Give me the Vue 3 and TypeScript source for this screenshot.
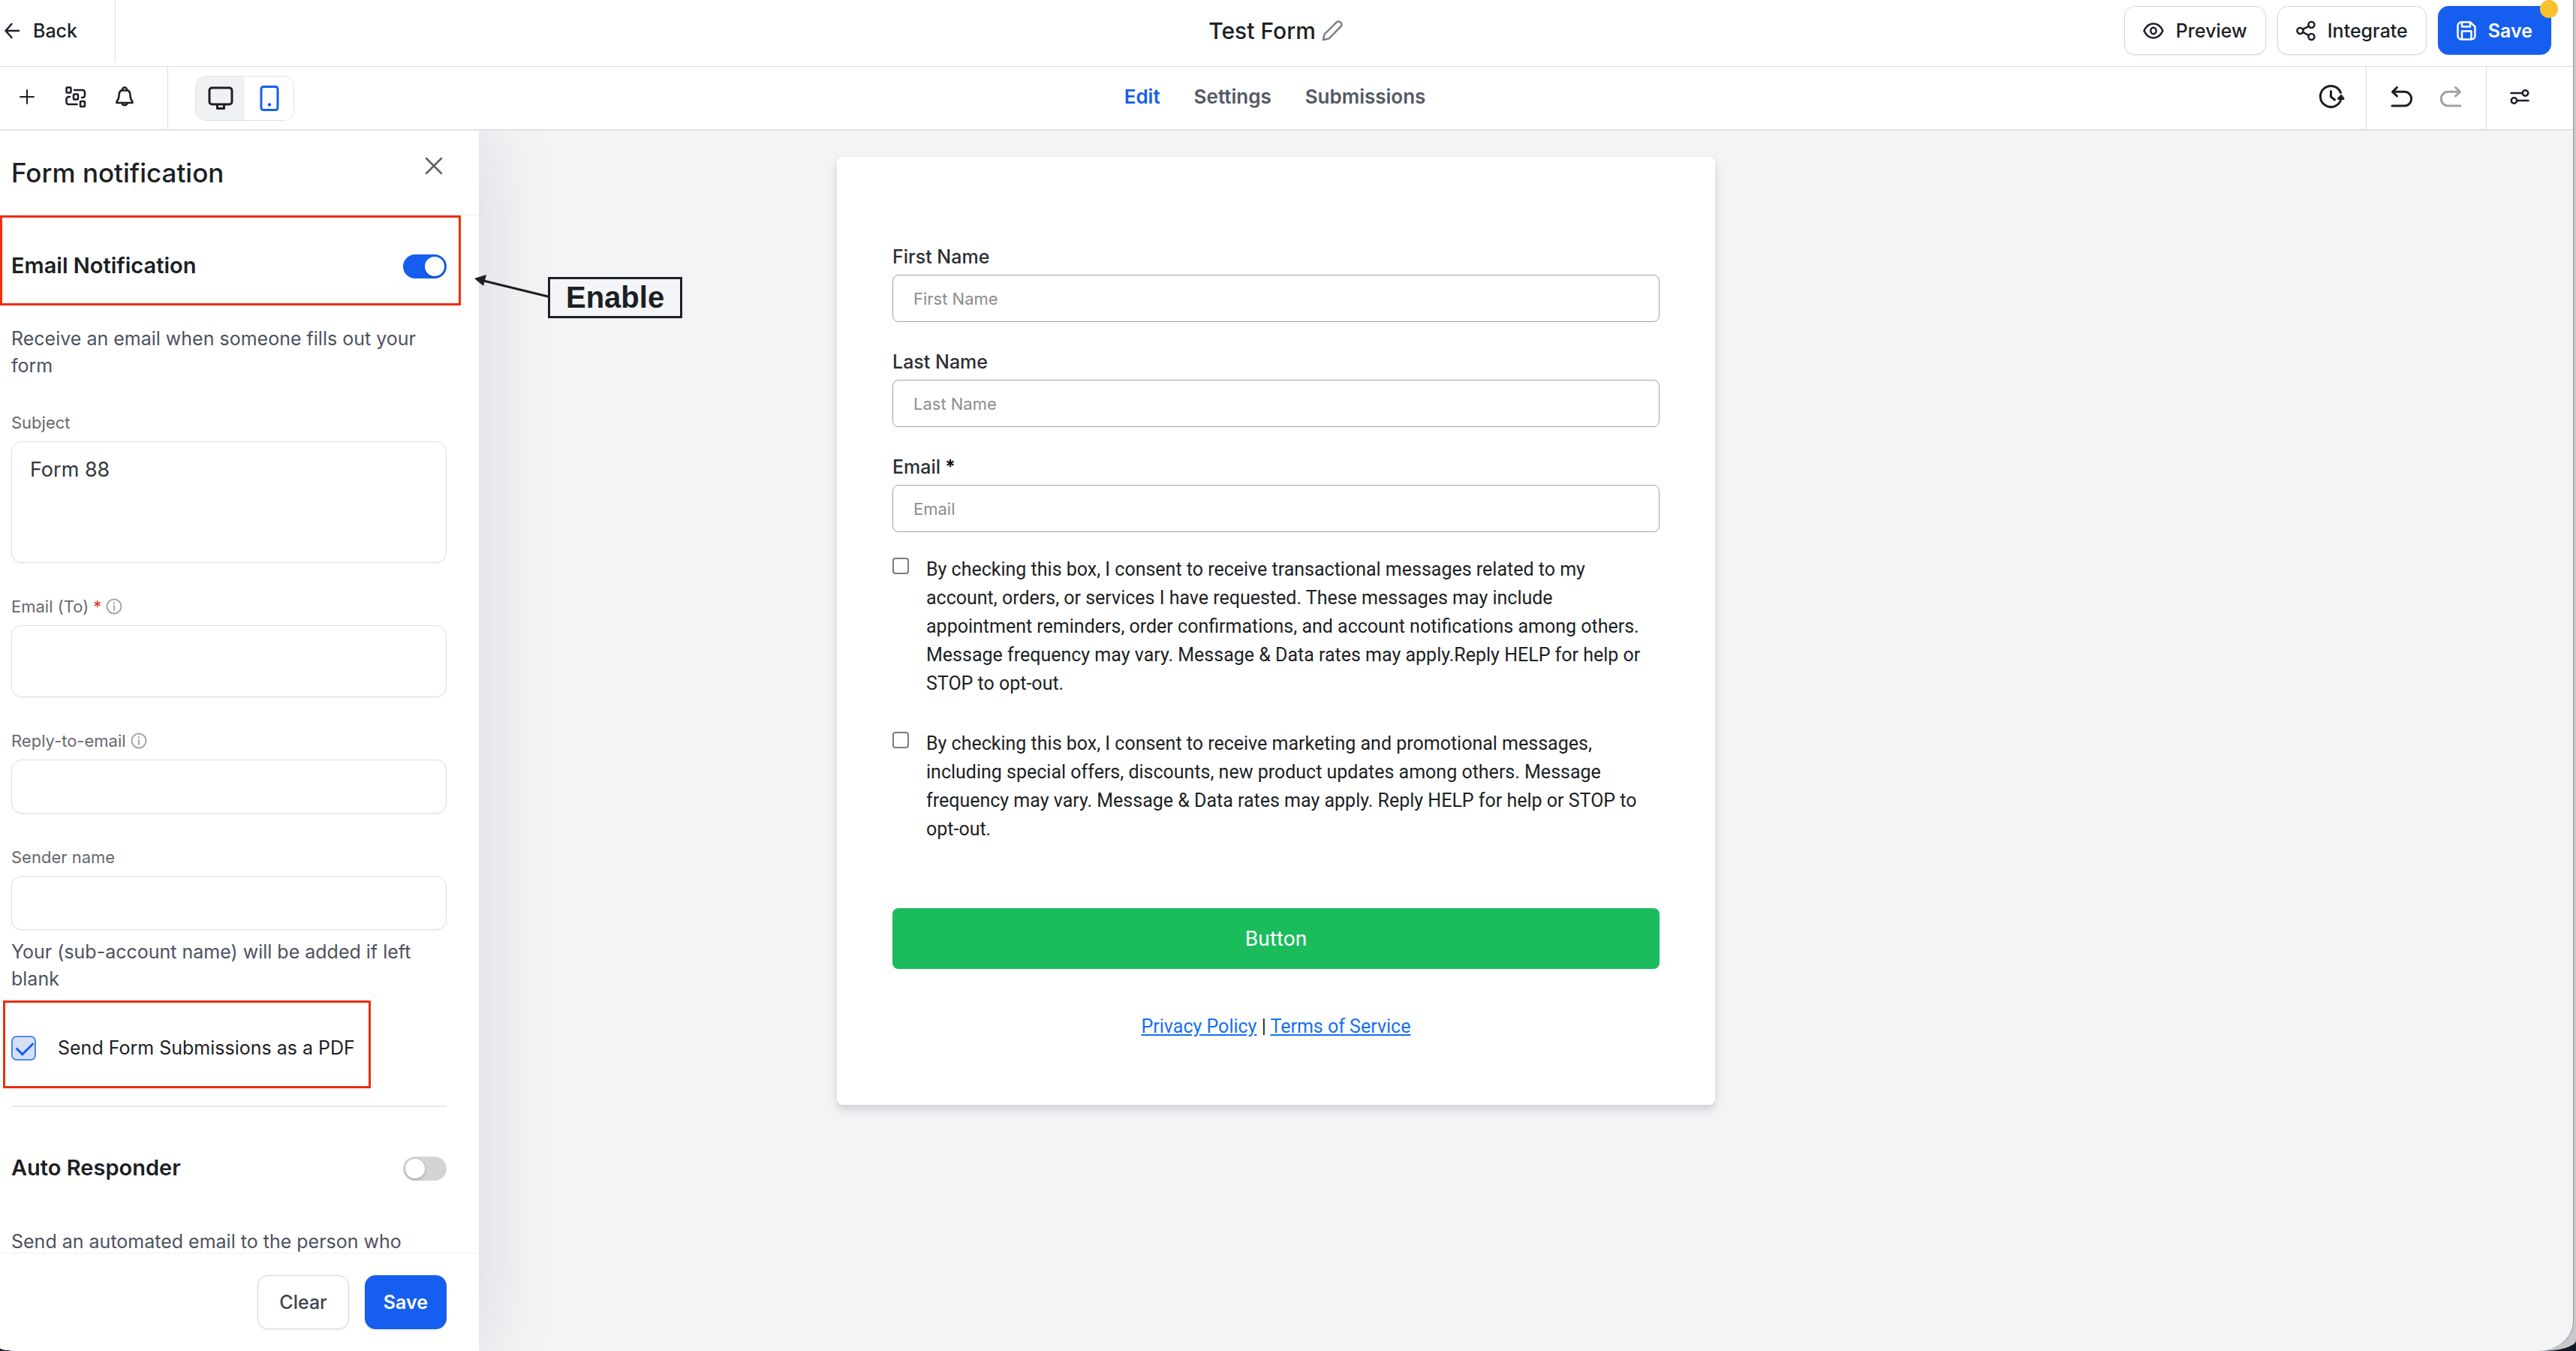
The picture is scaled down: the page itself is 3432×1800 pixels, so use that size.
<script setup lang="ts">
import { ref } from 'vue'

interface Field {
  id: string
  label: string
  required?: boolean
}

interface Consent {
  id: string
  text: string
}

const tabs = ['Edit', 'Settings', 'Submissions']
const activeTab = ref('Edit')

const subject = ref('Form 88')
const emailTo = ref('')
const replyTo = ref('')
const senderName = ref('')
const emailNotification = ref(true)
const autoResponder = ref(false)
const sendAsPdf = ref(true)

const fields: Field[] = [
  { id: 'first-name', label: 'First Name' },
  { id: 'last-name', label: 'Last Name' },
  { id: 'email', label: 'Email', required: true },
]

const consents: Consent[] = [
  {
    id: 'consent-transactional',
    text: 'By checking this box, I consent to receive transactional messages related to my account, orders, or services I have requested. These messages may include appointment reminders, order confirmations, and account notifications among others. Message frequency may vary. Message & Data rates may apply.Reply HELP for help or STOP to opt-out.',
  },
  {
    id: 'consent-marketing',
    text: 'By checking this box, I consent to receive marketing and promotional messages, including special offers, discounts, new product updates among others. Message frequency may vary. Message & Data rates may apply. Reply HELP for help or STOP to opt-out.',
  },
]
</script>

<template>
  <div class="desktop">
    <div class="bezel">
      <div class="window">
        <header class="topbar">
          <div class="topbar-left">
            <button class="back" type="button">
              <svg width="20" height="20" viewBox="0 0 20 20"><path d="M19 10H1.500M9.500 1 1.500 10l8 9" /></svg>
              Back
            </button>
          </div>
          <div class="title">
            <h1>Test Form</h1>
            <button class="icon-btn muted" type="button" aria-label="Rename form">
              <svg width="28" height="28" viewBox="0 0 28 28"><path d="M2 26l1.200-6.200a4 4 0 0 1 1-1.800L19.500 2.800a4 4 0 0 1 5.700 5.700L10 23.800a4 4 0 0 1-1.800 1z" /></svg>
            </button>
          </div>
          <div class="topbar-right">
            <button class="btn" type="button">
              <svg width="28" height="26" viewBox="0 0 28 26"><path d="M1.500 13C4 7.500 8.500 3.500 14 3.500s10 4 12.500 9.500C24 18.500 19.500 22.500 14 22.500S4 18.500 1.500 13z" /><ellipse cx="14" cy="13" rx="3.700" ry="4.200" /></svg>
              Preview
            </button>
            <button class="btn" type="button">
              <svg width="26" height="28" viewBox="0 0 26 28"><circle cx="20.500" cy="6" r="4" /><circle cx="5.500" cy="14" r="4" /><circle cx="20.500" cy="22" r="4" /><path d="M9 12.200l8-4.300M9 15.800l8 4.300" /></svg>
              Integrate
            </button>
            <button class="btn primary badge-host" type="button">
              <svg width="26" height="26" viewBox="0 0 26 26"><path d="M1.500 6.500a5 5 0 0 1 5-5H18l6.500 6v12a5 5 0 0 1-5 5h-13a5 5 0 0 1-5-5z" /><path d="M7 2v5.500h11V2M7 24V13.500h12.500V24" /></svg>
              Save
              <span class="badge"></span>
            </button>
          </div>
        </header>

        <nav class="toolbar">
          <div class="toolbar-left">
            <div class="tools">
              <button class="icon-btn" type="button" aria-label="Add element">
                <svg class="thin" width="28" height="28" viewBox="0 0 28 28"><path d="M14 5v18M5 14h18" /></svg>
              </button>
              <button class="icon-btn" type="button" aria-label="Conditional logic">
                <svg width="28" height="28" viewBox="0 0 28 28"><rect x="1.500" y="1.500" width="6" height="7" rx="1" /><rect x="11" y="10.500" width="6" height="7" rx="1" /><rect x="20" y="20" width="6" height="7" rx="1" /><path d="M12 5h11a3 3 0 0 1 3 3v4a3 3 0 0 1-3 3h-1M6 14H4.500a3 3 0 0 0-3 3v4a3 3 0 0 0 3 3H15.500" /></svg>
              </button>
              <button class="icon-btn" type="button" aria-label="Notifications">
                <svg width="28" height="28" viewBox="0 0 28 28"><path d="M11 4.500a3 3 0 0 1 6 0c3 1.300 4.500 4 4.500 7.500 0 4 1 6 3 8.500v1.500h-21v-1.500c2-2.500 3-4.500 3-8.500 0-3.500 1.500-6.200 4.500-7.500zM10.500 22.500a3.600 3.600 0 0 0 7 0M11 5.500h6" /></svg>
              </button>
            </div>
            <div class="devices">
              <button class="device" type="button" aria-label="Desktop view">
                <svg width="34" height="32" viewBox="0 0 34 32"><rect x="2" y="2" width="30" height="22" rx="3.500" /><path d="M12.500 25v4.500h9V25" /></svg>
              </button>
              <button class="device active" type="button" aria-label="Mobile view">
                <svg width="26" height="34" viewBox="0 0 26 34"><rect x="2" y="1.500" width="22" height="31" rx="3" /><circle class="dot" cx="13" cy="25.500" r="2.200" /></svg>
              </button>
            </div>
          </div>
          <div class="tabs">
            <button
              v-for="tab in tabs"
              :key="tab"
              class="tab"
              :class="{ active: tab === activeTab }"
              type="button"
              @click="activeTab = tab"
            >{{ tab }}</button>
          </div>
          <div class="toolbar-right">
            <div class="group history">
              <button class="icon-btn bold" type="button" aria-label="Version history">
                <svg width="34" height="32" viewBox="0 0 34 32"><path d="M29.500 10.500A14 14 0 1 0 30 19M16.500 8.500V16l5 4" /><path d="M26.500 18.500h6.500l-2.800-4z" /></svg>
              </button>
            </div>
            <div class="group steps">
              <button class="icon-btn bold" type="button" aria-label="Undo">
                <svg width="30" height="28" viewBox="0 0 30 28"><path d="M8.500 1.500l-6 5.800 6 5.700M3 7.300h15.500a9 9.200 0 0 1 0 18.700H2" /></svg>
              </button>
              <button class="icon-btn bold disabled" type="button" aria-label="Redo">
                <svg width="30" height="28" viewBox="0 0 30 28"><path d="M21.500 1.500l6 5.800-6 5.700M27 7.300H11.500a9 9.200 0 0 0 0 18.700H28" /></svg>
              </button>
            </div>
            <div class="group styles">
              <button class="icon-btn" type="button" aria-label="Styles">
                <svg width="26" height="20" viewBox="0 0 26 20"><circle cx="20.500" cy="5" r="3.700" /><circle cx="5.500" cy="15" r="3.700" /><path d="M1.500 5h15M9.500 15h15" /></svg>
              </button>
            </div>
          </div>
        </nav>

        <div class="workspace">
          <main class="canvas">
            <form class="card" @submit.prevent>
              <div v-for="field in fields" :key="field.id" class="form-field">
                <label :for="field.id">{{ field.label }}<span v-if="field.required" class="star"> *</span></label>
                <input :id="field.id" type="text" :placeholder="field.label" />
              </div>
              <div class="consents">
                <div v-for="item in consents" :key="item.id" class="consent">
                  <input :id="item.id" type="checkbox" />
                  <label :for="item.id">{{ item.text }}</label>
                </div>
              </div>
              <button class="submit" type="submit">Button</button>
              <p class="legal"><a href="#privacy">Privacy Policy</a> | <a href="#terms">Terms of Service</a></p>
            </form>
          </main>

          <aside class="panel">
            <div class="panel-head">
              <h2>Form notification</h2>
              <button class="icon-btn close" type="button" aria-label="Close">
                <svg width="24" height="24" viewBox="0 0 24 24"><path d="M2 2l20 20M22 2 2 22" /></svg>
              </button>
            </div>

            <div class="panel-body">
              <div class="section-row highlighted">
                <label for="email-notification">Email Notification</label>
                <input id="email-notification" v-model="emailNotification" class="switch" type="checkbox" role="switch" />
              </div>
              <p class="help lead">Receive an email when someone fills out your form</p>

              <div class="field">
                <label for="subject">Subject</label>
                <textarea id="subject" v-model="subject" class="box tall"></textarea>
              </div>
              <div class="field">
                <label for="email-to">
                  Email (To) <span class="required">*</span>
                  <svg width="22" height="22" viewBox="0 0 22 22"><circle cx="11" cy="11" r="9.500" /><path d="M11 10v6M11 6v1" /></svg>
                </label>
                <textarea id="email-to" v-model="emailTo" class="box medium"></textarea>
              </div>
              <div class="field">
                <label for="reply-to">
                  Reply-to-email
                  <svg width="22" height="22" viewBox="0 0 22 22"><circle cx="11" cy="11" r="9.500" /><path d="M11 10v6M11 6v1" /></svg>
                </label>
                <input id="reply-to" v-model="replyTo" class="box" type="email" />
              </div>
              <div class="field">
                <label for="sender-name">Sender name</label>
                <input id="sender-name" v-model="senderName" class="box" type="text" />
              </div>
              <p class="help">Your (sub-account name) will be added if left blank</p>

              <div class="pdf-row">
                <input id="send-pdf" v-model="sendAsPdf" type="checkbox" />
                <label for="send-pdf">Send Form Submissions as a PDF</label>
              </div>

              <hr />

              <div class="section-row responder">
                <label for="auto-responder">Auto Responder</label>
                <input id="auto-responder" v-model="autoResponder" class="switch" type="checkbox" role="switch" />
              </div>
              <p class="help">Send an automated email to the person who</p>
            </div>

            <div class="panel-foot">
              <button class="btn" type="button">Clear</button>
              <button class="btn primary" type="button">Save</button>
            </div>
          </aside>

          <div class="callout">
            <svg width="102" height="36" viewBox="0 0 102 36"><path d="M12 5l90 22" /><path class="tip" d="M0 2l16-5-4 15z" /></svg>
            <span>Enable</span>
          </div>
        </div>
      </div>
    </div>
  </div>
</template>

<style>
body {
  margin: 0;
}
</style>

<style scoped>
* {
  box-sizing: border-box;
}

.desktop {
  height: 100vh;
  overflow: hidden;
  background: #111a24;
  color: #1c1f24;
  font-family: Inter, "Liberation Sans", sans-serif;
  font-size: 25px;
}

.bezel {
  height: 100%;
  padding-right: 4px;
  background: #c6c8cb;
  border-radius: 0 0 48px 30px / 0 0 14px 4px;
}

.window {
  display: flex;
  flex-direction: column;
  height: 100%;
  overflow: hidden;
  background: #f3f4f6;
  border-radius: 0 0 46px 30px / 0 0 40px 4px;
  box-shadow: 1px 0 0 #94969a;
}

h1,
h2,
p {
  margin: 0;
}

button,
input,
textarea {
  font: inherit;
}

svg {
  flex: none;
  overflow: visible;
  fill: none;
  stroke: currentColor;
  stroke-width: 2.500;
  stroke-linecap: round;
  stroke-linejoin: round;
}

.thin {
  stroke-width: 2;
}

.icon-btn {
  display: flex;
  padding: 0;
  border: 0;
  background: none;
  color: #1c1f24;
}

.icon-btn.muted {
  color: #7d7f83;
}

.bold svg {
  stroke-width: 3;
}

.icon-btn.disabled {
  color: #9fa1a5;
}

/* top bar */
.topbar {
  display: grid;
  grid-template-columns: 1fr auto 1fr;
  flex: none;
  height: 89px;
  padding-right: 29px;
  border-bottom: 1px solid #dcdddf;
  background: #fff;
}

.topbar-left {
  display: flex;
  align-items: flex-start;
}

.back {
  display: flex;
  align-items: center;
  gap: 18px;
  width: 154px;
  height: 83px;
  padding: 0 0 1px 6px;
  border: 0;
  border-right: 1px solid #dcdddf;
  background: none;
  color: #1c1f24;
  font-weight: 500;
}

.title {
  display: flex;
  align-items: center;
  gap: 8px;
  height: 82px;
}

h1 {
  font-size: 30px;
  font-weight: 500;
}

.topbar-right {
  display: flex;
  justify-content: flex-end;
  gap: 15px;
  padding: 8px 0 15px;
}

.btn {
  display: flex;
  align-items: center;
  gap: 16px;
  padding: 0 24px;
  border: 1px solid #d5d7da;
  border-radius: 14px;
  background: #fff;
  box-shadow: 0 1px 3px rgba(16, 24, 40, 0.08);
  color: #1c1f24;
  font-weight: 500;
}

.btn.primary {
  border-color: #155eef;
  background: #155eef;
  color: #fff;
  font-weight: 600;
}

.badge-host {
  position: relative;
}

.badge {
  position: absolute;
  top: -9px;
  right: -10px;
  width: 24px;
  height: 24px;
  border-radius: 50%;
  background: #fbc02d;
}

/* toolbar */
.toolbar {
  display: grid;
  grid-template-columns: 1fr auto 1fr;
  flex: none;
  height: 85px;
  padding-right: 31px;
  border-bottom: 2px solid #dfe1e3;
  background: #fff;
}

.toolbar-left,
.toolbar-right {
  display: flex;
}

.tools {
  display: flex;
  align-items: center;
  gap: 37px;
  width: 224px;
  padding: 0 0 4px 22px;
  border-right: 1px solid #dcdddf;
}

.devices {
  display: flex;
  align-self: center;
  height: 60px;
  margin-left: 36px;
  overflow: hidden;
  border: 1px solid #dfe1e3;
  border-radius: 14px;
}

.device {
  display: flex;
  align-items: center;
  justify-content: center;
  width: 65px;
  padding: 0;
  border: 0;
  background: #eff1f3;
  color: #1c1f24;
}

.device svg {
  stroke-width: 3;
}

.device.active {
  background: #fff;
  color: #155eef;
}

.device .dot {
  fill: #155eef;
  stroke: none;
}

.tabs {
  display: flex;
  align-items: center;
  gap: 45px;
  padding-bottom: 4px;
  font-size: 26px;
}

.tab {
  padding: 0;
  border: 0;
  background: none;
  color: #535862;
  font-weight: 600;
}

.tab.active {
  color: #155eef;
}

.toolbar-right {
  justify-content: flex-end;
}

.group {
  display: flex;
  align-items: center;
  padding-bottom: 4px;
  border-right: 1px solid #dcdddf;
}

.history {
  padding-right: 29px;
}

.steps {
  gap: 35px;
  padding-right: 32px;
  padding-left: 32px;
}

.styles {
  padding-right: 27px;
  padding-left: 31px;
  border-right: 0;
}

/* canvas */
.workspace {
  position: relative;
  flex: 1;
  min-height: 0;
  overflow: hidden;
}

.canvas {
  display: flex;
  justify-content: center;
  height: 100%;
  padding: 35px 28px 0 0;
}

.card {
  align-self: flex-start;
  width: 1170px;
  padding: 117px 74px 85px;
  border-radius: 8px;
  background: #fff;
  box-shadow: 0 6px 12px rgba(16, 24, 40, 0.16);
}

.form-field {
  display: flex;
  flex-direction: column;
  gap: 8px;
  margin-bottom: 37px;
}

.form-field label {
  color: #2c2e35;
  font-weight: 500;
  line-height: 32px;
}

.star {
  color: #111;
  font-weight: 700;
}

.form-field input {
  height: 63px;
  padding: 0 27px;
  border: 1px solid #9fa1a3;
  border-radius: 8px;
  background: #fff;
  font-size: 22px;
}

.form-field input::placeholder {
  color: #8c8c8c;
  opacity: 1;
}

.consents {
  display: flex;
  flex-direction: column;
  gap: 42px;
  margin-top: -7px;
}

.consent {
  display: flex;
  align-items: flex-start;
  gap: 23px;
  padding-top: 1px;
  font-family: Roboto, sans-serif;
  line-height: 38px;
}

.consent + .consent {
  padding-top: 0;
}

.consent input {
  flex: none;
  width: 22px;
  height: 22px;
  margin: 3px 0 0;
  appearance: none;
  border: 2px solid #7a7c80;
  border-radius: 4px;
  background: #fff;
}

.submit {
  width: 100%;
  height: 81px;
  margin-top: 86px;
  border: 0;
  border-radius: 8px;
  background: #1abc5c;
  color: #fff;
  font-family: Roboto, sans-serif;
  font-size: 28px;
}

.legal {
  margin-top: 58px;
  font-family: Roboto, sans-serif;
  line-height: 38px;
  text-align: center;
}

.legal a {
  color: #1570ef;
}

/* notification panel */
.panel {
  position: absolute;
  top: 0;
  bottom: 0;
  left: 0;
  display: flex;
  flex-direction: column;
  width: 638px;
  background: #fff;
  box-shadow: 0 0 100px rgba(16, 24, 40, 0.13);
}

.panel-head {
  display: flex;
  align-items: flex-start;
  justify-content: space-between;
  flex: none;
  height: 113px;
  padding: 35px 48px 0 15px;
  border-bottom: 1px solid #ececee;
}

h2 {
  font-size: 35px;
  font-weight: 500;
  line-height: 42px;
}

.close {
  color: #5f6267;
}

.panel-body {
  flex: 1;
  min-height: 0;
  overflow: hidden;
  padding: 0 43px 0 15px;
}

.section-row {
  position: relative;
  display: flex;
  align-items: center;
  justify-content: space-between;
  height: 120px;
  padding-top: 13px;
  font-size: 29px;
  font-weight: 600;
}

.section-row.responder {
  height: 161px;
  padding-top: 0;
}

.highlighted::after {
  position: absolute;
  top: 0;
  right: -19px;
  bottom: 0;
  left: -15px;
  border: 3px solid #ee2f0c;
  content: "";
  pointer-events: none;
}

.switch {
  width: 58px;
  height: 32px;
  margin: 2px 0 0;
  appearance: none;
  border-radius: 16px;
  background: #d3d4d6;
}

.switch::before {
  display: block;
  width: 26px;
  height: 26px;
  margin: 3px;
  border-radius: 50%;
  background: #fff;
  box-shadow: 0 2px 4px rgba(0, 0, 0, 0.2);
  content: "";
}

.switch:checked {
  background: #155eef;
}

.switch:checked::before {
  margin-left: 29px;
}

.help {
  color: #4d525e;
  line-height: 36px;
}

.lead {
  margin: 26px 0 44px;
}

.field {
  display: flex;
  flex-direction: column;
  gap: 11px;
}

.field + .field {
  margin-top: 44px;
}

.field label {
  display: flex;
  align-items: center;
  gap: 6px;
  color: #66696e;
  font-size: 22px;
  line-height: 28px;
}

.field label svg {
  color: #a3a5a8;
  stroke-width: 2;
}

.required {
  color: #e0310c;
}

.box {
  width: 100%;
  height: 72px;
  padding: 0 24px;
  border: 1px solid #dddfe2;
  border-radius: 14px;
  background: #fff;
  box-shadow: 0 1px 3px rgba(16, 24, 40, 0.05);
  color: #33363d;
  font-size: 27px;
  resize: none;
}

.box.tall {
  height: 162px;
  padding-top: 20px;
}

.box.medium {
  height: 96px;
  padding-top: 20px;
}

.field + .help {
  margin-top: 11px;
}

.pdf-row {
  position: relative;
  display: flex;
  align-items: center;
  gap: 29px;
  width: fit-content;
  height: 117px;
  margin: 11px 0 23px;
  padding-top: 9px;
}

.pdf-row::after {
  position: absolute;
  top: 0;
  right: -21px;
  bottom: 0;
  left: -11px;
  border: 3px solid #ee2f0c;
  content: "";
  pointer-events: none;
}

.pdf-row input {
  width: 33px;
  height: 33px;
  margin: 0;
  appearance: none;
  border: 2px solid #4f83ef;
  border-radius: 7px;
  background: #d5e0f7;
}

.pdf-row input:checked::before {
  display: block;
  width: 19px;
  height: 10px;
  margin: 6px 5px;
  border: solid #155eef;
  border-width: 0 0 3px 3px;
  transform: rotate(-45deg);
  content: "";
}

hr {
  height: 2px;
  margin: 0;
  border: 0;
  background: #e7e8ea;
}

.panel-foot {
  display: flex;
  justify-content: flex-end;
  gap: 21px;
  flex: none;
  padding: 29px 43px 29px 15px;
  border-top: 1px solid #f0f1f3;
}

.panel-foot .btn {
  height: 72px;
}

.panel-foot .btn:first-child {
  padding: 0 28px;
  color: #3f434b;
}

/* annotation drawn over the workspace */
.callout {
  position: absolute;
  top: 195px;
  left: 632px;
  display: flex;
  align-items: flex-start;
}

.callout svg {
  margin-right: -4px;
  stroke: #1c1f24;
  stroke-width: 3;
}

.callout .tip {
  fill: #1c1f24;
  stroke: none;
}

.callout span {
  padding: 0 21px;
  border: 3px solid #1c1f24;
  background: #f3f5f8;
  font-family: "Liberation Sans", Arial, sans-serif;
  font-size: 40px;
  font-weight: 700;
  line-height: 49px;
}
</style>
